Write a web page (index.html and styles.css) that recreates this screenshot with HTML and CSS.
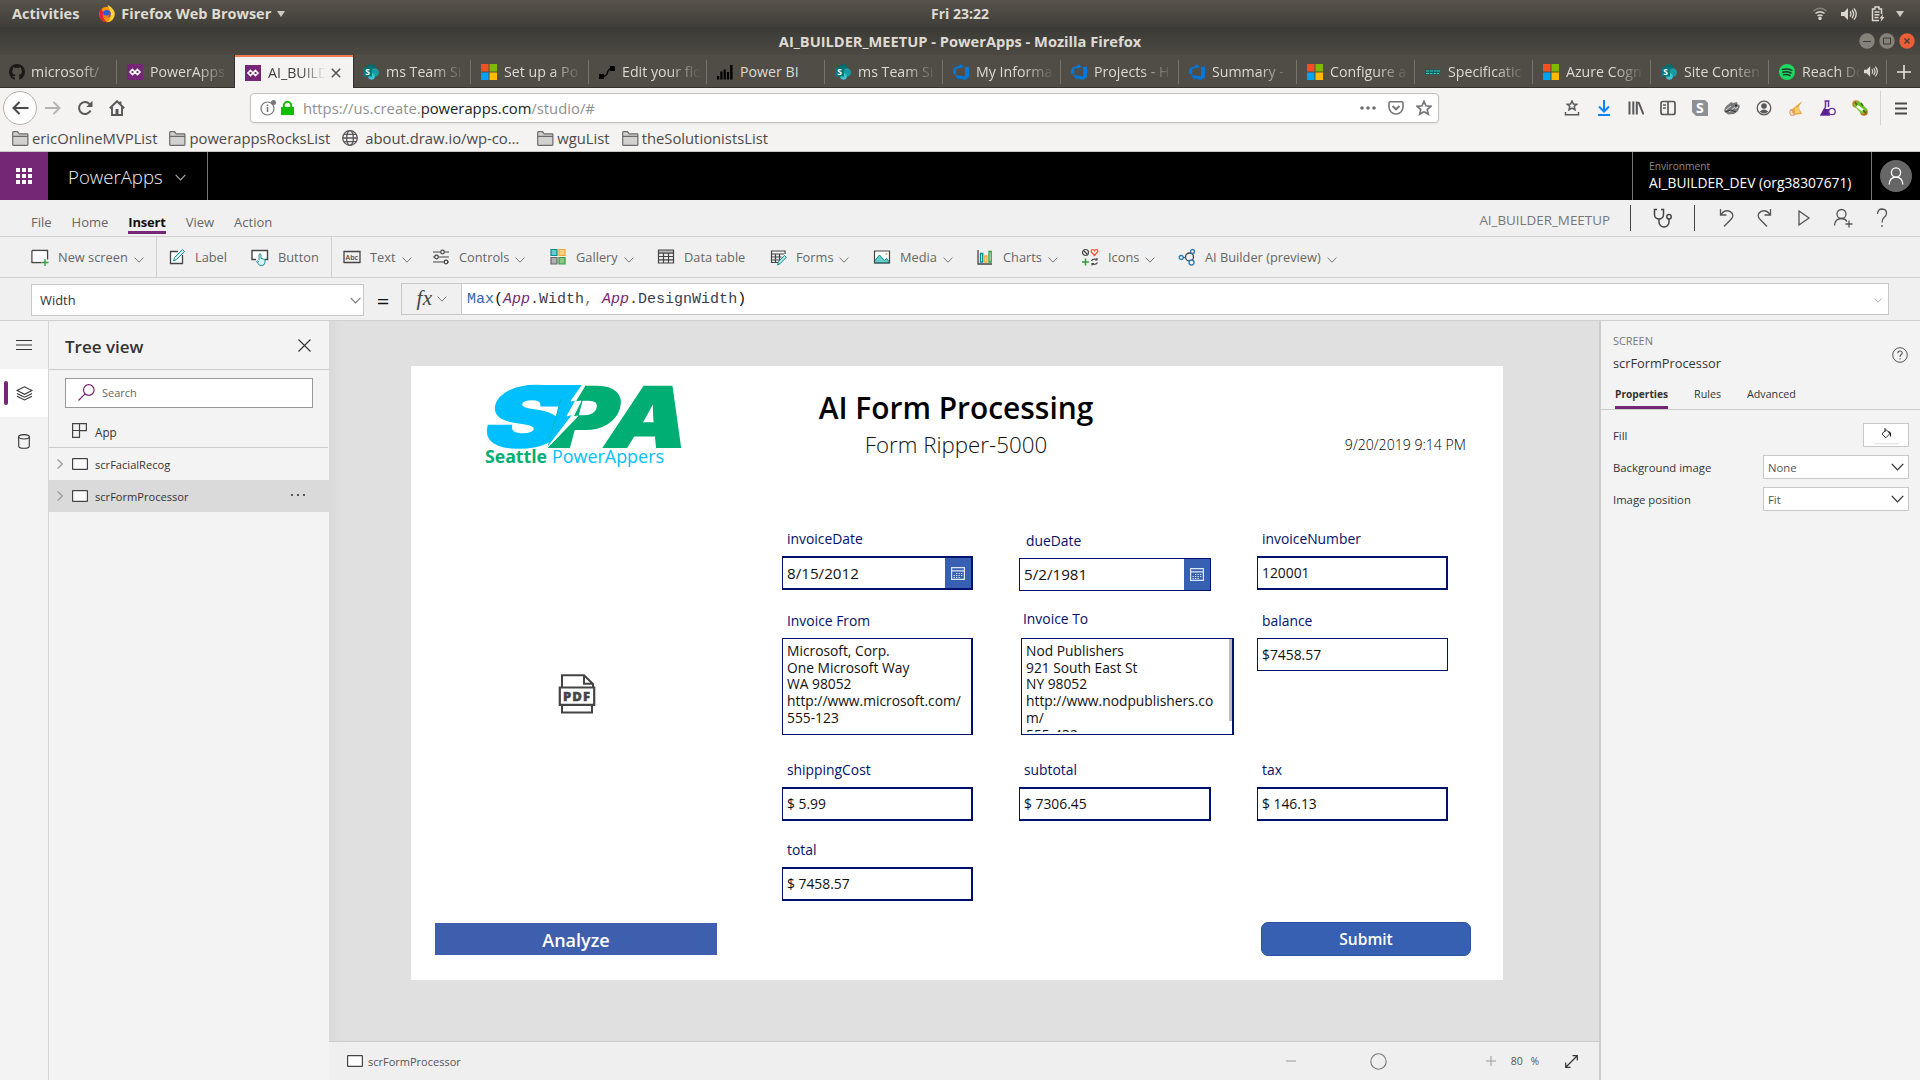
FILE: index.html
```
<!DOCTYPE html>
<html lang="en">
<head>
<meta charset="utf-8">
<title>AI_BUILDER_MEETUP - PowerApps</title>
<link rel="stylesheet" href="styles.css">
</head>
<body>
<svg class="defs" width="0" height="0" aria-hidden="true">
  <symbol id="chev" viewBox="0 0 10 6"><path d="M.6.6 5 5.2 9.4.6" fill="none" stroke="currentColor"/></symbol>
  <symbol id="folder" viewBox="0 0 17 15"><path d="M.7 13.5V1.5q0-.8.8-.8h4l1.6 2.2h8q.8 0 .8.8v9.8q0 .8-.8.8H1.500q-.8 0-.8-.8zM.7 5.300h15.2" fill="#d2d1d0" stroke="#6b6b6b" stroke-width="1.200"/></symbol>
  <symbol id="pa" viewBox="0 0 16 16"><path d="M0 0h16v16H0z" fill="#742774"/><path d="M5.500 5.500 8 8l-2.500 2.500L3 8zM10.500 5.500 13 8l-2.500 2.500L8 8z" fill="none" stroke="#fff" stroke-width="1.600"/></symbol>
  <symbol id="sp" viewBox="0 0 16 16"><circle cx="8" cy="5" r="4.800" fill="#036c70"/><circle cx="11.800" cy="8.500" r="4.200" fill="#1a9ba1"/><circle cx="8.500" cy="12.500" r="3.300" fill="#37c6d0"/><path d="M0 3.500h9v9H0z" fill="#03787c"/><text x="2.200" y="11" font-family="Open Sans, sans-serif" font-size="8.500" font-weight="700" fill="#fff">S</text></symbol>
  <symbol id="ms" viewBox="0 0 16 16"><path d="M0 0h7.500v7.500H0z" fill="#f25022"/><path d="M8.500 0H16v7.500H8.500z" fill="#7fba00"/><path d="M0 8.500h7.500V16H0z" fill="#00a4ef"/><path d="M8.500 8.500H16V16H8.500z" fill="#ffb900"/></symbol>
  <symbol id="devops" viewBox="0 0 16 16"><path d="M0 5.800 1.500 3.700 7 1.500V0l4.200 3.100-8 1.700v5.700L0 9.800zM16 2.800V13l-4 3-6.300-2v2l-4-5 10.300 1.200V3z" fill="#0078d7"/></symbol>
  <symbol id="screen" viewBox="0 0 16 12"><rect x=".6" y=".6" width="14.800" height="10.800" rx=".5" fill="#fff" stroke="#444" stroke-width="1.200"/></symbol>
  <symbol id="speaker" viewBox="0 0 16 14"><path d="M0 5h3l4-4v12L3 9H0z" fill="currentColor"/><path d="M9 4.500q2 2.500 0 5M11 3q3.300 4 0 8M13 1.500q4.500 5.500 0 11" fill="none" stroke="currentColor" stroke-width="1.300"/></symbol>
  <symbol id="cal" viewBox="0 0 14 13"><path d="M.6.6h12.800v11.800H.6zM.6 3.800h12.800" fill="none" stroke="#dfe6f5" stroke-width="1.200"/><path d="M5 6.500h1.300M7.500 6.500h1.300M10 6.500h1.300M2.600 8.500h1.300M5 8.500h1.300M7.500 8.500h1.300M10 8.500h1.300M2.600 10.500h1.300M5 10.500h1.300M7.500 10.500h1.300" stroke="#dfe6f5"/></symbol>
</svg>

<header class="gnome">
  <div class="gnome-left">
    <span>Activities</span>
    <svg class="fox" viewBox="0 0 16 18"><circle cx="8" cy="9.500" r="7.800" fill="#ff9500"/><path d="M2 3Q0 7 .3 11q1.500 6 7.700 6.300Q3 13 4 7z" fill="#e3213d"/><path d="M8.500 0q5 2 6.800 7 1 5-2.300 8-2.500 2-5 2Q13 13 12 8z" fill="#ffd43a"/><circle cx="7.800" cy="8.800" r="3.900" fill="#2b5fd9"/><path d="M4 9q3 3 6 .5 0 4-3.500 3.500Q4 12 4 9z" fill="#ff7a12"/></svg>
    <span>Firefox Web Browser</span>
    <i class="tri"></i>
  </div>
  <div class="clock">Fri 23:22</div>
  <div class="gnome-right">
    <svg width="14" height="13" viewBox="0 0 14 13" fill="none" stroke="#dcd8d0" stroke-width="1.500"><path d="M.5 4Q7-1.500 13.500 4" stroke="#85817a"/><path d="M2.500 6.500q4.500-3.500 9 0M4.500 9q2.500-1.800 5 0"/><circle cx="7" cy="11.300" r="1" fill="#dcd8d0"/></svg>
    <svg class="tray-sound" width="16" height="14"><use href="#speaker"/></svg>
    <svg width="14" height="16" viewBox="0 0 14 16" fill="none" stroke="#dcd8d0" stroke-width="1.500"><path d="M8 14.500H1.500V3H4V1h4v2h2.500v5M3.500 6h5M3.500 8.800h5M3.500 11.500h4"/><path d="m12 8-3.500 4.500h2L9.500 16l4-5h-2z" fill="#dcd8d0" stroke="none"/></svg>
    <i class="tri"></i>
  </div>
</header>

<div class="titlebar">
  <span class="wintitle">AI_BUILDER_MEETUP - PowerApps - Mozilla Firefox</span>
  <span class="winbtns">
    <svg viewBox="0 0 16 16"><circle cx="8" cy="8" r="7.700" fill="#85827a"/><path d="M4 8.500h8" stroke="#3c3b37"/></svg>
    <svg viewBox="0 0 16 16"><circle cx="8" cy="8" r="7.700" fill="#85827a"/><path d="M4.500 5h7v6h-7z" fill="none" stroke="#3c3b37"/></svg>
    <svg viewBox="0 0 16 16"><circle cx="8" cy="8" r="7.700" fill="#ea5f35"/><path d="m5.500 5.500 5 5m0-5-5 5" stroke="#3c3b37" stroke-width="1.200"/></svg>
  </span>
</div>

<nav class="tabs">
  <div class="tab first"><svg viewBox="0 0 16 16"><circle cx="8" cy="8" r="8" fill="#1b1a18"/><path d="M5.800 16v-2.500q-2.300.3-2.800-1.700 2 1.200 2.900.3l.5-1q-3.400-.8-3.200-3.800 0-1 .8-2-.3-1 .1-2 1.200.1 2 .8 2-.5 3.900 0 .8-.7 2-.8.400 1 .1 2 .8 1 .8 2 0 3-3.200 3.800.6.700.6 1.800V16z" fill="#55524a"/></svg><span>microsoft/</span></div>
  <div class="tab"><svg viewBox="0 0 16 16"><use href="#pa"/></svg><span>PowerApps</span></div>
  <div class="tab active"><svg viewBox="0 0 16 16"><use href="#pa"/></svg><span>AI_BUILD</span><svg class="close" viewBox="0 0 10 10"><path d="m.8.8 8.400 8.400m0-8.400L.8 9.200" stroke="#555" stroke-width="1.600"/></svg></div>
  <div class="tab"><svg viewBox="0 0 16 16"><use href="#sp"/></svg><span>ms Team Si</span></div>
  <div class="tab"><svg viewBox="0 0 16 16"><use href="#ms"/></svg><span>Set up a Po</span></div>
  <div class="tab"><svg viewBox="0 0 16 16"><path d="M0 10h5v5H0zM11 2h5v5h-5z"/><path d="M3 12.500c9 0 2-8 11-8" fill="none" stroke="#000" stroke-width="1.300"/></svg><span>Edit your flo</span></div>
  <div class="tab"><svg viewBox="0 0 16 16"><path d="M0 12h2.200v3.500H0zM3.300 7.500h2.200v8H3.300zM6.600 5.500h2.200v10H6.600zM9.900 8h2.200v7.500H9.900zM13.200 1h2.300v14.500h-2.300z"/></svg><span class="full">Power BI</span></div>
  <div class="tab"><svg viewBox="0 0 16 16"><use href="#sp"/></svg><span>ms Team Si</span></div>
  <div class="tab"><svg viewBox="0 0 16 16"><use href="#devops"/></svg><span>My Informa</span></div>
  <div class="tab"><svg viewBox="0 0 16 16"><use href="#devops"/></svg><span>Projects - H</span></div>
  <div class="tab"><svg viewBox="0 0 16 16"><use href="#devops"/></svg><span>Summary -</span></div>
  <div class="tab"><svg viewBox="0 0 16 16"><use href="#ms"/></svg><span>Configure a</span></div>
  <div class="tab"><svg viewBox="0 0 16 16"><path d="M.5 5.500h15l-1 5H0z" fill="#13605f"/><path d="M1 7h3M1 9.500h3M5 7h3M5 9.500h2.500M9 7h2.500M12 7h3M9 9.500h2M12 9.500h2" stroke="#2cd0c8" stroke-width="1.200"/></svg><span>Specificatic</span></div>
  <div class="tab"><svg viewBox="0 0 16 16"><use href="#ms"/></svg><span>Azure Cogn</span></div>
  <div class="tab"><svg viewBox="0 0 16 16"><use href="#sp"/></svg><span>Site Conten</span></div>
  <div class="tab playing"><svg viewBox="0 0 16 16"><circle cx="8" cy="8" r="8" fill="#1ed760"/><path d="M3.500 5.500q5-1.500 9.300.8M4 8.300q4.300-1.200 8 .7M4.500 10.900q3.500-1 6.600.7" fill="none" stroke="#24342a" stroke-width="1.500" stroke-linecap="round"/></svg><span>Reach Do</span><svg class="snd" width="13" height="12"><use href="#speaker"/></svg></div>
  <div class="newtab"><svg width="14" height="14" viewBox="0 0 14 14"><path d="M7 0v14M0 7h14" stroke="#e6e3dd" stroke-width="1.600"/></svg></div>
</nav>

<div class="navbar">
  <div class="back"><svg width="17" height="14" viewBox="0 0 17 14"><path d="M16.500 7H1.500M7.500 1l-6 6 6 6" fill="none" stroke="#4a4a4a" stroke-width="2"/></svg></div>
  <svg width="16" height="14" viewBox="0 0 16 14"><path d="M0 7h14.500M8.500 1l6 6-6 6" fill="none" stroke="#b5b4b2" stroke-width="1.900"/></svg>
  <svg width="16" height="16" viewBox="0 0 16 16"><path d="M13.500 10.500A6 6 0 1 1 12.500 4" fill="none" stroke="#58585a" stroke-width="2"/><path d="M15.500.8v6.200H9.300z" fill="#58585a"/></svg>
  <svg width="16" height="16" viewBox="0 0 16 16"><path d="M.8 8.300 8 1.200l7.200 7.100M3 7v8h10V7M11.500 1.500v3" fill="none" stroke="#58585a" stroke-width="1.900"/><path d="M6.500 9h3v6h-3z" fill="#58585a"/></svg>
  <div class="urlbar">
    <svg width="16" height="16" viewBox="0 0 16 16"><circle cx="7.500" cy="8.500" r="6.500" fill="none" stroke="#777" stroke-width="1.200"/><path d="M7.500 7v5M7.500 4.500V6" stroke="#777" stroke-width="1.600"/><circle cx="13.500" cy="2.500" r="2.500" fill="#777"/></svg>
    <svg width="13" height="14" viewBox="0 0 13 14"><path d="M0 6h13v8H0z" fill="#12bc00"/><path d="M2.800 7V4.500a3.700 3.700 0 0 1 7.400 0V7" fill="none" stroke="#12bc00" stroke-width="2"/></svg>
    <span class="url">https://us.create.<b>powerapps.com</b>/studio/#</span>
    <span class="urlicons">
      <svg width="16" height="4" viewBox="0 0 16 4" fill="#6e6e70"><circle cx="2" cy="2" r="1.800"/><circle cx="8" cy="2" r="1.800"/><circle cx="14" cy="2" r="1.800"/></svg>
      <svg width="16" height="14" viewBox="0 0 16 14" fill="none" stroke="#777" stroke-width="1.600"><path d="M1 1.800q0-1 1-1h12q1 0 1 1V6a7 7 0 0 1-14 0z"/><path d="m4.500 5 3.500 3.300L11.500 5" stroke-width="2"/></svg>
      <svg width="16" height="16" viewBox="0 0 16 16"><path d="m8 1.300 2 4.500 4.900.5-3.700 3.200 1.100 4.800L8 11.800l-4.300 2.500 1.100-4.800L1.100 6.300 6 5.800z" fill="none" stroke="#777" stroke-width="1.700"/></svg>
    </span>
  </div>
  <div class="ext">
    <svg viewBox="0 0 16 16" fill="none" stroke="#58585a" stroke-width="1.500"><path d="m8 1 1.400 3 3.300.3-2.500 2.200.8 3.300L8 8.200 5 9.800l.8-3.300-2.500-2.200 3.300-.3zM1.500 12v2.800h13V12"/></svg>
    <svg viewBox="0 0 16 16" fill="none" stroke="#0a84ff" stroke-width="2"><path d="M8 0v11M3 6.500l5 5 5-5M2 15h12"/></svg>
    <svg viewBox="0 0 16 16" stroke="#58585a" stroke-width="2"><path d="M1.500 1.500v13M5.300 1.500v13M8.800 1.500v13M10.500 2l5 12.500"/></svg>
    <svg viewBox="0 0 16 16" fill="none" stroke="#58585a" stroke-width="1.700"><rect x="1" y="1.500" width="14" height="13" rx="2"/><path d="M8 2v12M3 5h3M3 8h3" /></svg>
    <svg viewBox="0 0 16 16"><path d="M0 0h13l3 3v13H4l-4-4z" fill="#8f9096"/><text x="4" y="13" font-family="Open Sans, sans-serif" font-weight="700" font-size="14" fill="#fff">S</text></svg>
    <svg viewBox="0 0 16 16"><path d="M0 11q1-5 5-7l2-2 2 1 4-1 .5 2 2.500 2-2 5-4 3-6 .5z" fill="#77787a"/><path d="m2 10 5-4M5 12l6-5M11 9l3-2" stroke="#dcdcdc"/><path d="m1 12 6-2 5 2" fill="none" stroke="#333"/><circle cx="12" cy="5.500" r="1" fill="#222"/></svg>
    <svg viewBox="0 0 16 16"><circle cx="8" cy="8" r="6.800" fill="none" stroke="#58585a" stroke-width="1.300"/><circle cx="8" cy="6" r="2.800" fill="#58585a"/><path d="M3.800 11.500q4-4 8.400 0Q8 15.500 3.800 11.500z" fill="#58585a"/></svg>
    <svg viewBox="0 0 16 16"><path d="m14.500 1-4 6 3.500 7-9 1-3-4 6-5z" fill="#eaa53c"/><path d="m7 7 4 1 1 5-5 .5z" fill="#f7cf6a"/><path d="M3 9q-3 4 0 6.500l4-.5-2-2z" fill="#f5dcae" stroke="#d9a08a"/></svg>
    <svg viewBox="0 0 16 16"><path d="M4.500 1h5M5.500 1v6L1 15h9M8.500 1v6" fill="none" stroke="#6b2fa0" stroke-width="1.500"/><path d="m4 9-3 6h8V9z" fill="#5c2291"/><circle cx="12" cy="11.500" r="3.200" fill="#fff" stroke="#6b2fa0" stroke-width="1.300"/></svg>
    <svg viewBox="0 0 16 16"><circle cx="4" cy="4" r="3.800" fill="#c98a2a"/><circle cx="12" cy="12" r="3.800" fill="#b86e1c"/><path d="m4 3 9 9" stroke="#6fc42a" stroke-width="7"/><path d="m5 6 6 4.500" stroke="#fff" stroke-width="2.800"/><path d="m3 2 2 3M11 10l3 3M9 3l2 3" stroke="#3f6b12" stroke-width="1.500"/></svg>
  </div>
  <div class="burger"><svg width="12" height="13" viewBox="0 0 12 13"><path d="M0 1.500h12M0 6.500h12M0 11.500h12" stroke="#4a4a4a" stroke-width="2"/></svg></div>
</div>

<div class="bookmarks">
  <span><svg width="17" height="15"><use href="#folder"/></svg>ericOnlineMVPList</span>
  <span><svg width="17" height="15"><use href="#folder"/></svg>powerappsRocksList</span>
  <span class="globe"><svg width="16" height="16" viewBox="0 0 16 16" fill="none" stroke="#58585a" stroke-width="1.300"><circle cx="8" cy="8" r="7.300"/><ellipse cx="8" cy="8" rx="3.400" ry="7.300"/><path d="M.7 8h14.600M2 4.300h12M2 11.700h12"/></svg>about.draw.io/wp-co…</span>
  <span><svg width="17" height="15"><use href="#folder"/></svg>wguList</span>
  <span><svg width="17" height="15"><use href="#folder"/></svg>theSolutionistsList</span>
</div>

<header class="suite">
  <div class="waffle"><i></i><i></i><i></i><i></i><i></i><i></i><i></i><i></i><i></i></div>
  <div class="brand">PowerApps<svg width="11" height="7"><use href="#chev"/></svg></div>
  <div class="env"><small>Environment</small><span>AI_BUILDER_DEV (org38307671)</span></div>
  <div class="me"><svg width="32" height="32" viewBox="0 0 32 32"><circle cx="16" cy="16" r="16" fill="#666"/><circle cx="16" cy="12.500" r="4.600" fill="none" stroke="#fff" stroke-width="1.300"/><path d="M9.200 24.500q.3-7.200 6.800-7.400 6.500.2 6.800 7.400" fill="none" stroke="#fff" stroke-width="1.300"/></svg></div>
</header>

<div class="menu">
  <span>File</span><span>Home</span><span class="on">Insert</span><span>View</span><span>Action</span>
  <div class="menu-right">
    <span class="proj">AI_BUILDER_MEETUP</span>
    <div class="health"><svg width="20" height="20" viewBox="0 0 20 20" fill="none" stroke="#444" stroke-width="1.500"><path d="M4 1.500H1.500v5a4.500 4.500 0 0 0 9 0v-5H8M6 11v3a5 5 0 0 0 10 0v-3"/><circle cx="16" cy="8.800" r="2.200"/></svg></div>
    <div class="acts">
      <svg viewBox="0 0 20 20"><path d="M4.500 1v6h6M4.800 6.800q4-6 9.500-3.200 4.500 3.200 1 7.400L8 18.500"/></svg>
      <svg viewBox="0 0 20 20"><path d="M15.500 1v6h-6M15.200 6.800q-4-6-9.500-3.200-4.500 3.200-1 7.400l7.300 7.500"/></svg>
      <svg viewBox="0 0 20 20"><path d="M5 3v14l10-7z"/></svg>
      <svg viewBox="0 0 20 20"><circle cx="8.500" cy="6" r="4.500"/><path d="M1.500 17.500q.5-7 7-7 3.500 0 5.500 3M16 12.500v7M12.500 16h7"/></svg>
      <svg viewBox="0 0 20 20"><path d="M5.500 6q.2-5 4.700-5 4.300.2 4.300 4.200 0 2.300-2.500 4.300-2 1.800-2 5M10 17v2"/></svg>
    </div>
  </div>
</div>

<div class="ribbon">
  <div class="rb"><svg viewBox="0 0 18 18"><path d="M1 2.500h15.500v9M10.500 14.500H1v-12" fill="none" stroke="#444" stroke-width="1.400"/><path d="M1.700 3.200h14v10.500h-14z" fill="#fff"/><path d="M14 11v7M10.500 14.500h7" stroke="#349b3c" stroke-width="1.400"/></svg>New screen<svg class="cv"><use href="#chev"/></svg></div>
  <div class="rb cut"><svg viewBox="0 0 18 18"><path d="M14.500 7v8.500h-12v-12H10" fill="#fff" stroke="#444" stroke-width="1.300"/><path d="m5.500 13 1-3.500 8-8 2 2-8 8z" fill="#c9efee" stroke="#1d8f93"/></svg>Label</div>
  <div class="rb"><svg viewBox="0 0 18 18"><path d="M5 11.500H1v-9h15.500v9H14" fill="#fff" stroke="#444" stroke-width="1.400"/><path d="M8 12V6.500q1-1.500 2 0v4l4 .8v3l-1.500 3h-4L5.500 13.500q1-1.500 2.500.5" fill="#d9f6f5" stroke="#1d8f93"/></svg>Button</div>
  <div class="rb cut"><svg viewBox="0 0 18 18"><path d="M1 3.500h16v11H1z" fill="none" stroke="#444" stroke-width="1.300"/><text x="2.600" y="11.700" font-family="Open Sans, sans-serif" font-size="7" font-weight="600" fill="#444">Abc</text></svg>Text<svg class="cv"><use href="#chev"/></svg></div>
  <div class="rb"><svg viewBox="0 0 18 18" fill="#f0f0f0" stroke="#444" stroke-width="1.200"><path d="M1 4h16M1 9h16M1 14h16"/><circle cx="10.500" cy="4" r="1.800"/><circle cx="4.500" cy="9" r="1.800"/><circle cx="14" cy="14" r="1.800"/></svg>Controls<svg class="cv"><use href="#chev"/></svg></div>
  <div class="rb"><svg viewBox="0 0 18 18" stroke-width="1.200"><path d="M2 1.500h6v6H2z" fill="#66cdcb" stroke="#048b8b"/><path d="M10 1.500h6v6h-6z" fill="#fccf82" stroke="#f2a633"/><path d="M2 9.500h6v6.500H2z" fill="#b0b0b0" stroke="#666"/><path d="M10 9.500h6v6.500h-6z" fill="#88c888" stroke="#349b3c"/></svg>Gallery<svg class="cv"><use href="#chev"/></svg></div>
  <div class="rb"><svg viewBox="0 0 18 18"><path d="M1.500 2h15v3h-15z" fill="#b8b8b8"/><path d="M1.500 2h15v13h-15zM1.500 5.200h15M1.500 8.500h15M1.500 11.800h15M6.500 5v10M11.500 5v10" fill="none" stroke="#444" stroke-width="1.200"/></svg>Data table</div>
  <div class="rb"><svg viewBox="0 0 18 18"><path d="M9 14.500H2.500V3H16v3M2.500 6H15M2.500 9h10M2.500 12H10M6.500 6v8M10.500 6v6" fill="none" stroke="#444" stroke-width="1.200"/><path d="m8.500 17 1-3.500 6-6 1.800 1.800-6 6.200z" fill="#aee4e3" stroke="#1d8f93"/></svg>Forms<svg class="cv"><use href="#chev"/></svg></div>
  <div class="rb"><svg viewBox="0 0 18 18"><path d="M1.500 3h15v12h-15z" fill="#fff"/><path d="m1.500 13 5-6 5 5.500 2-2 3 3.500v1h-15z" fill="#66cdcb" stroke="#048b8b"/><path d="M1.500 3h15v12h-15z" fill="none" stroke="#444" stroke-width="1.200"/><circle cx="13.500" cy="6" r="1" fill="#f2a633"/></svg>Media<svg class="cv"><use href="#chev"/></svg></div>
  <div class="rb"><svg viewBox="0 0 18 18" fill="none" stroke-width="1.300"><path d="M2 2v14h14" stroke="#444"/><path d="M4.500 5.500h2.200V14H4.500z" stroke="#048b8b"/><path d="M8.800 8H11v6H8.800z" stroke="#f2a633"/><path d="M13 3.500h2.200V14H13z" stroke="#349b3c"/></svg>Charts<svg class="cv"><use href="#chev"/></svg></div>
  <div class="rb"><svg viewBox="0 0 18 18" fill="none" stroke-width="1.200"><circle cx="4.500" cy="4.500" r="3" stroke="#444"/><path d="m2.500 2.500 4 4" stroke="#444"/><path d="M13.500 7.500 10.300 4q-.5-2.500 1.500-2.500 1.300 0 1.700 1.200.4-1.200 1.700-1.200 2 0 1.500 2.500z" stroke="#e8552e"/><path d="M4.500 10.500v7M1 14h7" stroke="#349b3c" stroke-width="1.500"/><path d="M10.500 13q1-2.500 5.500-1.500M16 10v2h-2M16.500 14.500q-1 2.500-5.500 1.500M11 17.500v-2h2" stroke="#444"/></svg>Icons<svg class="cv"><use href="#chev"/></svg></div>
  <div class="rb"><svg viewBox="0 0 18 18" fill="none" stroke-width="1.300"><circle cx="11.500" cy="9" r="4" stroke="#444"/><circle cx="3.200" cy="9.500" r="2" stroke="#2a7ab0"/><circle cx="14.500" cy="3.500" r="2" fill="#f0f0f0" stroke="#2a7ab0"/><circle cx="13.500" cy="14.500" r="2.500" fill="#f0f0f0" stroke="#2a7ab0"/><path d="M5 9.500h2.500" stroke="#2a7ab0"/></svg>AI Builder (preview)<svg class="cv"><use href="#chev"/></svg></div>
</div>

<div class="formula">
  <div class="prop">Width<svg width="11" height="7"><use href="#chev"/></svg></div>
  <div class="eq">=</div>
  <div class="fx"><i>fx</i><svg width="10" height="6"><use href="#chev"/></svg></div>
  <div class="expr"><code><span class="fn">Max</span>(<em>App</em><span class="mem">.Width</span><span class="com">,</span> <em>App</em><span class="mem">.DesignWidth</span>)</code><svg width="8" height="5"><use href="#chev"/></svg></div>
</div>

<main class="work">
  <aside class="rail">
    <div><svg width="16" height="10" viewBox="0 0 16 10"><path d="M0 .5h16M0 5h16M0 9.500h16" stroke="#333"/></svg></div>
    <div class="on"><svg width="17" height="15" viewBox="0 0 17 15" fill="none" stroke="#333" stroke-width="1.100"><path d="m1 4.500 7.500-3.700L16 4.500 8.500 8.300zM1 7.500l7.500 3.700L16 7.500M1 10.300 8.500 14l7.500-3.700"/></svg></div>
    <div><svg width="12" height="15" viewBox="0 0 12 15" fill="none" stroke="#333" stroke-width="1.100"><ellipse cx="6" cy="2.800" rx="5.300" ry="2.200"/><path d="M.7 2.800V12q0 2.300 5.300 2.300T11.300 12V2.800"/></svg></div>
  </aside>

  <aside class="tree">
    <div class="tree-head"><h2>Tree view</h2><svg width="13" height="13" viewBox="0 0 13 13"><path d="m.5.5 12 12m0-12-12 12" stroke="#333" stroke-width="1.100"/></svg></div>
    <div class="search"><svg width="17" height="17" viewBox="0 0 17 17" fill="none" stroke="#742774" stroke-width="1.200"><circle cx="10.800" cy="6" r="5.300"/><path d="M7 9.800.5 16.500"/></svg>Search</div>
    <div class="row app"><svg width="15" height="15" viewBox="0 0 15 15"><path d="M.6.6h13.800v7H7.500v6.800H.6zM7.500.6v7M.6 7.500h7" fill="none" stroke="#444" stroke-width="1.200"/></svg>App</div>
    <div class="row"><svg class="rc" width="6" height="10" viewBox="0 0 6 10"><path d="m.6.5 4.700 4.500L.6 9.500" fill="none" stroke="#999" stroke-width="1.200"/></svg><svg width="16" height="12"><use href="#screen"/></svg>scrFacialRecog</div>
    <div class="row sel"><svg class="rc" width="6" height="10" viewBox="0 0 6 10"><path d="m.6.5 4.700 4.500L.6 9.500" fill="none" stroke="#999" stroke-width="1.200"/></svg><svg width="16" height="12"><use href="#screen"/></svg>scrFormProcessor<svg class="dots" width="14" height="2" viewBox="0 0 14 2"><path d="M0 0h2v2H0zM6 0h2v2H6zM12 0h2v2h-2z" fill="#555"/></svg></div>
  </aside>

  <section class="stage">
    <div class="desk">
      <div class="board">
        <div class="board-left">
          <svg class="logo" width="204" height="92" viewBox="0 0 204 92">
            <g transform="translate(-1 66.500)" font-family="Inter, sans-serif" font-weight="900" font-size="83">
              <g transform="skewX(-15)">
                <text x="-2" y="0" textLength="77" lengthAdjust="spacingAndGlyphs" fill="#00bfff" stroke="#00bfff" stroke-width="2">S</text>
                <text x="62" y="0" textLength="67" lengthAdjust="spacingAndGlyphs" fill="#00ae74" stroke="#00ae74" stroke-width="2">P</text>
                <text x="120" y="0" textLength="80" lengthAdjust="spacingAndGlyphs" fill="#00ae74" stroke="#00ae74" stroke-width="2">A</text>
              </g>
            </g>
            <path d="M44 5h59L91 22l6-1-9 17 5-1-28 29 13-47H48z" fill="#00bfff"/>
            <path d="m103 4-11 18 6-1-8 16 5-1-31 32 26-34-6 2 9-16-5 1 12-17z" fill="#fff" stroke="#fff"/>
            <text x="2" y="83" textLength="62" lengthAdjust="spacingAndGlyphs" font-family="Open Sans, sans-serif" font-size="18.500" font-weight="700" fill="#00ae74">Seattle</text>
            <text x="69" y="83" textLength="112" lengthAdjust="spacingAndGlyphs" font-family="Open Sans, sans-serif" font-size="18.500" fill="#00bfff">PowerAppers</text>
          </svg>
          <svg class="pdf" width="38" height="40" viewBox="0 0 38 40"><path d="M4 13V1.300h22L35 10v3M4 32v6.500h30V32M26 1.500v8.300h8.500" fill="none" stroke="#444" stroke-width="2"/><path d="M1.800 13.500h34.400v17.300H1.800z" fill="#fff" stroke="#444" stroke-width="2.200"/><text x="5" y="26.800" textLength="28" lengthAdjust="spacingAndGlyphs" font-family="Open Sans, sans-serif" font-size="12.800" letter-spacing="1" font-weight="800" fill="#444" stroke="#444" stroke-width=".4">PDF</text></svg>
          <div class="analyze">Analyze</div>
        </div>
        <div class="board-main">
          <div class="board-head">
            <div class="titles"><h1>AI Form Processing</h1><p>Form Ripper-5000</p></div>
            <time>9/20/2019 9:14 PM</time>
          </div>
          <div class="form">
            <div class="f"><label>invoiceDate</label><div class="in date">8/15/2012<i><svg width="14" height="13"><use href="#cal"/></svg></i></div></div>
            <div class="f due"><label>dueDate</label><div class="in date">5/2/1981<i><svg width="14" height="13"><use href="#cal"/></svg></i></div></div>
            <div class="f"><label>invoiceNumber</label><div class="in">120001</div></div>
            <div class="f"><label>Invoice From</label><div class="in area">Microsoft, Corp.<br>One Microsoft Way<br>WA 98052<br>http://www.microsoft.com/<br>555-123</div></div>
            <div class="f to"><label>Invoice To</label><div class="in area">Nod Publishers<br>921 South East St<br>NY 98052<br>http://www.nodpublishers.co<br>m/<br>555-432</div></div>
            <div class="f"><label>balance</label><div class="in thin">$7458.57</div></div>
            <div class="f"><label>shippingCost</label><div class="in">$ 5.99</div></div>
            <div class="f"><label>subtotal</label><div class="in wide">$ 7306.45</div></div>
            <div class="f"><label>tax</label><div class="in">$ 146.13</div></div>
            <div class="f"><label>total</label><div class="in">$ 7458.57</div></div>
          </div>
          <div class="submit">Submit</div>
        </div>
      </div>
    </div>
    <footer class="status">
      <svg width="16" height="12"><use href="#screen"/></svg><span class="crumb">scrFormProcessor</span>
      <div class="zoom">
        <svg width="10" height="10" viewBox="0 0 10 10"><path d="M0 5h10" stroke="#999"/></svg>
        <svg class="knob" width="17" height="17" viewBox="0 0 17 17"><circle cx="8.500" cy="8.500" r="7.700" fill="none" stroke="#777" stroke-width="1.100"/></svg>
        <svg width="10" height="10" viewBox="0 0 10 10"><path d="M0 5h10M5 0v10" stroke="#999"/></svg>
        <span class="pct">80</span><span class="sign">%</span>
        <svg class="expand" width="13" height="13" viewBox="0 0 13 13"><path d="M1 12 12 1M7.500.7h4.800v4.800M.7 7.500v4.800h4.800" fill="none" stroke="#333" stroke-width="1.200"/></svg>
      </div>
    </footer>
  </section>

  <aside class="props">
    <div class="props-head">
      <div><small>SCREEN</small><strong>scrFormProcessor</strong></div>
      <svg width="16" height="16" viewBox="0 0 16 16" fill="none" stroke="#555"><circle cx="8" cy="8" r="7.300"/><path d="M5.800 6.300Q5.900 4 8 4t2.200 2q0 1.100-1.200 1.800Q8 8.500 8 10M8 11.200v1.300" stroke-width="1.100"/></svg>
    </div>
    <div class="props-tabs"><span class="on">Properties</span><span>Rules</span><span>Advanced</span></div>
    <div class="prow"><label>Fill</label><div class="fillbox"><svg width="11" height="11" viewBox="0 0 11 11"><path d="m1 6 4-4.500L9 5.500 4.800 9.800zM4 0v4" fill="none" stroke="#333"/><path d="M7 3q3.500 0 3 6-1.200-.5-1.200-3z" fill="#000"/></svg><i></i></div></div>
    <div class="prow"><label>Background image</label><div class="sel">None<svg width="13" height="8"><use href="#chev"/></svg></div></div>
    <div class="prow"><label>Image position</label><div class="sel">Fit<svg width="13" height="8"><use href="#chev"/></svg></div></div>
  </aside>
</main>
</body>
</html>
```
FILE: styles.css
```
* { box-sizing: border-box; }
html, body { margin: 0; width: 1920px; height: 1080px; overflow: hidden; }
body { font: 13px "Open Sans", "Noto Sans", sans-serif; color: #333; background: #f0f0f0; display: flex; flex-direction: column; }
svg { display: block; flex: none; }
.defs { position: absolute; }
h1, h2, p { margin: 0; }

/* desktop top bar */
.gnome { height: 27px; display: grid; grid-template-columns: 1fr auto 1fr; align-items: center; background: linear-gradient(#57534b, #403e39); color: #dfdbd2; font-weight: 700; font-size: 14.500px; line-height: 18px; }
.gnome-left { display: flex; align-items: center; padding-left: 12px; }
.fox { width: 16px; height: 18px; margin: 0 6px 0 20px; }
.tri { border: 4.500px solid transparent; border-top: 6px solid #cfcbc3; border-bottom: 0; margin-left: 6px; }
.clock { font-size: 14px; }
.gnome-right { display: flex; align-items: center; justify-content: flex-end; gap: 14px; padding-right: 16px; }
.gnome-right .tri { margin-left: -3px; }
.tray-sound { color: #dcd8d0; }
.titlebar { height: 28px; display: grid; grid-template-columns: 1fr auto 1fr; align-items: center; background: linear-gradient(#3b3a36, #4c4943); color: #dfdbd2; font-weight: 700; font-size: 14.650px; line-height: 18px; }
.wintitle { grid-column: 2; }
.winbtns { display: flex; gap: 4px; justify-content: flex-end; padding-right: 5px; }
.winbtns svg { width: 16px; height: 16px; }

/* browser tabs */
.tabs { height: 33px; display: flex; background: #504d46; box-shadow: inset 0 -1px #33312d; color: #dedad3; font-size: 14.200px; }
.tab { width: 118px; padding: 0 4px 0 10px; display: flex; align-items: center; gap: 10px; position: relative; }
.tab.first { width: 117px; padding-left: 9px; gap: 6px; }
.tab svg { width: 16px; height: 16px; }
.tab::after { content: ""; position: absolute; right: 0; top: 5px; width: 1px; height: 24px; background: #787469; }
.tab:nth-child(2)::after, .tab.active::after { display: none; }
.tab span { flex: 1; min-width: 0; overflow: hidden; white-space: nowrap; margin-left: -3px; -webkit-mask-image: linear-gradient(90deg, #000 58%, transparent 97%); mask-image: linear-gradient(90deg, #000 58%, transparent 97%); }
.tab .full { -webkit-mask-image: none; mask-image: none; }
.tab.first span { margin-left: 0; }
.tab.active { background: #f4f3f1; border-top: 2px solid #ee7a4f; box-shadow: -1px 0 #33312d, 1px 0 #33312d; color: #3f3f3f; gap: 10px; padding: 0 10px; }
.tab.active .close { width: 10px; height: 10px; margin: 0 2px 0 -6px; }
.tab.playing { padding-right: 9px; }
.tab.playing .snd { width: 14px; height: 13px; margin-left: -9px; }
.newtab { width: 33px; display: grid; place-items: center; }

/* navigation */
.navbar { height: 40px; background: #f4f3f1; display: flex; align-items: center; padding-left: 3px; gap: 16px; }
.back { width: 34px; height: 34px; border: 1px solid #b4b2af; border-radius: 50%; background: #fcfcfc; display: grid; place-items: center; margin-right: -8px; }
.urlbar { width: 1189px; height: 30px; margin: 0 0 0 109px; border: 1px solid #c3c1be; border-radius: 4px; background: #fff; display: flex; align-items: center; padding: 0 6px 0 9px; box-shadow: 0 1px 2px #0001; }
.urlbar > svg + svg { margin-left: 5px; }
.url { margin-left: 9px; font-size: 14.800px; color: #8f8f8f; }
.url b { font-weight: 400; color: #222; }
.urlicons { margin-left: auto; display: flex; align-items: center; gap: 12px; }
.ext { display: flex; gap: 16px; margin-left: 109px; }
.ext svg { width: 16px; height: 16px; }
.burger { border-left: 1px solid #d5d3d0; height: 34px; margin-left: -4px; padding-left: 14px; display: grid; place-items: center; }
.bookmarks { height: 24px; background: #f4f3f1; border-bottom: 1px solid #c9c7c4; display: flex; align-items: center; font-size: 14.800px; color: #4a4a4a; padding: 0 0 3px 12px; gap: 12px; }
.bookmarks span { display: flex; align-items: center; gap: 3px; height: 20px; white-space: nowrap; }
.bookmarks .globe { gap: 7px; margin: 0 6px 0 0; }

/* suite header */
.suite { height: 48px; background: #000; color: #fff; display: flex; }
.waffle { width: 48px; background: #742774; display: grid; grid-template-columns: repeat(3, 4px); grid-auto-rows: 4px; gap: 2px; place-content: center; }
.waffle i { background: #fff; }
.brand { width: 160px; padding-left: 20px; border-right: 1px solid #777; display: flex; align-items: center; font-size: 18.600px; font-weight: 300; gap: 12px; color: #f2f2f2; padding-top: 1px; }
.brand svg { color: #aaa; margin-top: 2px; }
.env { margin-left: auto; width: 240px; border-left: 1px solid #777; border-right: 1px solid #777; padding: 7px 0 0 16px; display: flex; flex-direction: column; }
.env small { font-size: 10.200px; line-height: 14px; color: #8a8a8a; }
.env span { font-size: 13.750px; line-height: 20px; white-space: nowrap; }
.me { width: 48px; display: grid; place-items: center; }

/* menu */
.menu { height: 37px; border-bottom: 1px solid #d0d0d0; display: flex; gap: 20px; padding-left: 31px; color: #666; font-size: 13px; }
.menu > span { height: 34px; line-height: 18px; padding-top: 13px; }
.menu .on { border-bottom: 3px solid #742774; font-weight: 700; color: #111; letter-spacing: -.2px; }
.menu-right { margin-left: auto; display: flex; }
.proj { font-size: 13.400px; line-height: 40px; margin-right: 20px; color: #777; }
.health { height: 26px; margin-top: 5px; width: 65px; border-left: 1px solid #444; border-right: 1px solid #444; display: grid; place-items: center; }
.acts { display: flex; gap: 19px; padding: 8px 28px 0 21px; }
.menu-right .acts { margin-right: -1px; padding-right: 29px; }
.acts svg { width: 20px; height: 20px; fill: none; stroke: #555; stroke-width: 1.300; }

/* ribbon */
.ribbon { height: 41px; border-bottom: 1px solid #d0d0d0; padding-left: 31px; display: grid; grid-template-columns: 137px 83px 92px 89px 117px 108px 112px 104px 103px 105px 97px 1fr; font-size: 12.800px; color: #666; }
.rb { display: flex; align-items: center; gap: 9px; white-space: nowrap; position: relative; }
.rb > svg:first-child { width: 18px; height: 18px; }
.rb .cv { width: 10px; height: 6px; margin: 6px 0 0 -3px; color: #777; }
.rb.cut::before { content: ""; position: absolute; left: -12px; top: 0; height: 40px; width: 1px; background: #d0d0d0; }

/* formula bar */
.formula { height: 43px; border-bottom: 1px solid #d0d0d0; display: flex; padding: 5px 0 0 31px; }
.prop { width: 333px; height: 32px; margin-top: 1px; border: 1px solid #c8c8c8; background: #fff; display: flex; align-items: center; justify-content: space-between; padding: 0 2px 0 8px; font-size: 12.900px; }
.prop svg, .fx svg { color: #777; }
.eq { width: 37px; text-align: center; font-size: 22px; line-height: 35px; color: #111; padding-left: 1px; }
.fx { width: 60px; height: 32px; border: 1px solid #c8c8c8; border-right: 0; display: flex; align-items: center; justify-content: center; gap: 4px; }
.fx i { font: italic 21px "Liberation Serif", serif; color: #444; padding-bottom: 2px; letter-spacing: .5px; }
.expr { width: 1428px; height: 32px; border: 1px solid #c8c8c8; background: #fff; display: flex; align-items: center; justify-content: space-between; padding: 0 6px 0 5px; }
.expr svg { color: #999; margin-top: 2px; }
.expr code { font: 15px "Liberation Mono", monospace; color: #111; white-space: pre; }
.fn { color: #2f65b0; }
.expr em { color: #742774; }
.mem { color: #3c3c50; }
.com { color: #777; }

/* workspace */
.work { flex: 1; min-height: 0; display: flex; }
.rail { width: 49px; background: #f3f3f3; border-right: 1px solid #d6d6d6; }
.rail div { height: 48px; display: grid; place-items: center; position: relative; }
.rail .on { background: #fff; }
.rail .on::before { content: ""; position: absolute; left: 4px; top: 12px; width: 4px; height: 24px; border-radius: 2px; background: #742774; }
.tree { width: 280px; background: #f3f3f3; }
.tree-head { height: 49px; border-bottom: 1px solid #ccc; display: flex; align-items: center; justify-content: space-between; padding: 0 18px 0 16px; }
.tree-head h2 { font-size: 17px; font-weight: 600; padding-top: 2px; }
.search { width: 248px; height: 30px; margin: 8px 0 0 16px; border: 1px solid #999; background: #fff; display: flex; align-items: center; gap: 7px; padding: 0 0 1px 12px; font-size: 11px; color: #666; }
.row { height: 32px; display: flex; align-items: center; gap: 7px; padding: 0 24px 0 8px; font-size: 11.100px; }
.row .rc { margin-right: 2px; }
.row.app { height: 40px; margin-right: 1px; padding: 9px 0 0 23px; gap: 8px; border-bottom: 1px solid #ccc; font-size: 11.700px; }
.row.app svg { margin-top: -3px; }
.row.sel { background: #dadada; }
.row .dots { margin: -3px 0 0 auto; }
.stage { width: 1270px; display: flex; flex-direction: column; background: linear-gradient(90deg, #d9d9d9, #e0e0e0 14px); }
.desk { flex: 1; padding: 45px 0 0 82px; }
.board { width: 1092px; height: 614px; background: #fff; display: grid; grid-template-columns: 371px 1fr; color: #111; }
.board-left { display: flex; flex-direction: column; padding-left: 24px; }
.logo { margin: 14px 0 0 48px; overflow: visible; }
.pdf { margin: 202px 0 0 123px; }
.analyze { width: 282px; height: 32px; margin-top: auto; margin-bottom: 25px; background: #3e5fae; color: #fff; font-size: 18px; font-weight: 600; line-height: 35px; text-align: center; }
.board-main { display: flex; flex-direction: column; }
.board-head { height: 157px; display: flex; justify-content: space-between; padding: 21px 37px 0 37px; }
.titles { width: 274px; text-align: center; }
h1 { font-size: 29.900px; line-height: 42px; font-weight: 600; white-space: nowrap; color: #000; margin: 0 -10px; }
.titles p { font-size: 22.300px; line-height: 32px; font-weight: 300; }
time { font-size: 14.100px; font-weight: 300; line-height: 20px; margin-top: 48px; color: #000; }
.form { display: grid; grid-template-columns: 237px 238px 191px; grid-template-rows: 82px 149px 80px 80px; font-size: 13.870px; line-height: 16.700px; }
label { display: block; }
.f { position: relative; width: 191px; }
.f label { height: 33px; padding: 8px 0 0 5px; color: #00126b; }
.in { height: 34px; border: 2px solid #00126b; border-width: 2px 2px 2px 1px; background: #fff; padding: 0 0 0 4px; display: flex; align-items: center; }
.in.date { font-size: 15.200px; }
.in i { width: 26px; align-self: stretch; margin-left: auto; background: #3860b2; display: grid; place-items: center; }
.in.wide { width: 192px; }
.due { padding-top: 2px; }
.due label { padding-left: 7px; }
.due .in { height: 33px; width: 192px; border-width: 1px; }
.in.area { display: block; height: 97px; border-width: 1px 2px 1px 1px; padding-top: 4px; overflow: hidden; font-size: 13.800px; line-height: 16.700px; }
.in.thin { border-width: 1px; height: 33px; padding-top: 1px; }
.to label { padding: 6px 0 0 4px; }
.to .in.area { width: 213px; margin-left: 2px; background: linear-gradient(#bcbcbc, #bcbcbc) 100% 0 / 3px 82px no-repeat #fff; padding-bottom: 2px; overflow: clip; overflow-clip-margin: content-box; }
.submit { width: 210px; height: 34px; margin: 8px 0 0 479px; border: 1px solid #2c519f; border-radius: 7px; background: #3860b2; color: #fff; font-size: 15.600px; font-weight: 600; text-align: center; line-height: 33px; }
.status { height: 39px; background: #efefef; border-top: 1px solid #ccc; display: flex; align-items: center; padding: 0 21px 0 18px; font-size: 11px; color: #555; }
.crumb { margin-left: 5px; }
.zoom { margin-left: auto; display: flex; align-items: center; }
.knob { margin: 0 99px 0 74px; }
.pct { margin-left: 15px; font-size: 10.500px; }
.sign { margin: 0 26px 0 8px; font-size: 10px; }

/* properties */
.props { width: 321px; background: #f3f3f3; border-left: 2px solid #ccc; }
.props-head { height: 57px; display: flex; justify-content: space-between; align-items: flex-start; padding: 11px 12px 0 12px; }
.props-head > svg { margin-top: 15px; }
.props small { display: block; font-size: 10.900px; line-height: 17px; color: #777; }
.props strong { display: block; font-weight: 400; font-size: 12.800px; line-height: 28px; }
.props-tabs { height: 32px; border-bottom: 1px solid #ccc; display: flex; gap: 26px; padding-left: 14px; font-size: 10.700px; line-height: 16px; }
.props-tabs span { height: 31px; padding-top: 8px; }
.props-tabs .on { border-bottom: 3px solid #742774; font-weight: 700; font-size: 10.200px; }
.prow { height: 32px; display: flex; align-items: center; justify-content: space-between; padding: 0 11px 0 12px; font-size: 11.300px; }
.props-tabs + .prow { margin-top: 9px; }
.sel > svg { color: #333; }
.prow .sel { width: 146px; height: 24px; border: 1px solid #c8c8c8; background: #fff; display: flex; align-items: center; justify-content: space-between; padding: 0 4px; color: #555; }
.fillbox { width: 46px; height: 24px; border: 1px solid #c8c8c8; background: #fff; display: flex; flex-direction: column; align-items: center; padding-top: 4px; }
.fillbox i { width: 25px; height: 3px; box-shadow: 0 1px 2px #0002; margin-top: 1px; }
```
